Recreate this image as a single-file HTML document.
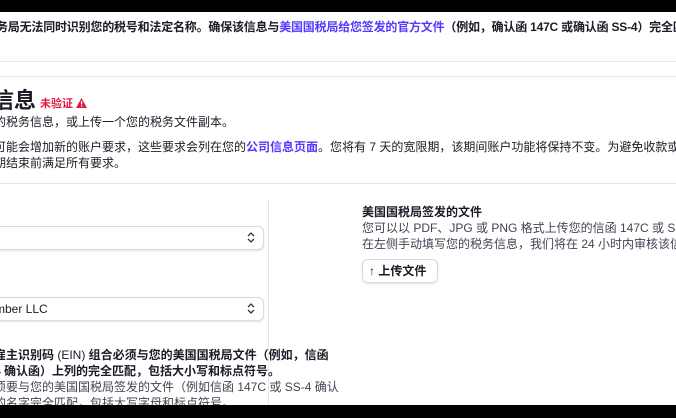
<!DOCTYPE html>
<html><head><meta charset="utf-8"><style>
html,body{margin:0;padding:0;width:676px;height:418px;overflow:hidden;background:#fff;position:relative;font-family:"Liberation Sans","Noto Sans CJK SC",sans-serif;color:#1a1b25}
.a{position:absolute;white-space:nowrap;font-size:12px;line-height:16px}
.b{font-weight:bold}
.link{color:#533afd}
.g{color:#414552}
.sel{position:absolute;left:-10px;width:272px;height:22px;border:1px solid #d5dbe1;border-radius:6px;box-shadow:0 1px 2px rgba(0,0,0,.12);background:#fff}
.chev{position:absolute;right:8px;top:4px}
</style></head><body>
<div style="position:absolute;left:0;top:0;width:676px;height:12px;background:#000"></div>
<div class="a b" style="left:-4px;top:19px;letter-spacing:-0.2px">务局无法同时识别您的税号和法定名称。确保该信息与<span class="link">美国国税局给您签发的官方文件</span>（例如，确认函 147C 或确认函 SS-4）完全匹配。如</div>
<div style="position:absolute;left:0;top:61px;width:676px;height:1px;background:#e3e8ee"></div>
<div style="position:absolute;left:0;top:76px;width:676px;height:1px;background:#e3e8ee"></div>
<div class="a b" style="left:-8px;top:86px;font-size:22px;line-height:30px">信息</div>
<div class="a b" style="left:40px;top:96px;font-size:11px;color:#df1b41">未验证 <svg width="11" height="10" viewBox="0 0 11 10" style="vertical-align:-1px"><path d="M5.5 0L11 10H0Z" fill="#df1b41"/><rect x="5" y="3" width="1.2" height="3.6" fill="#fff"/><rect x="5" y="7.5" width="1.2" height="1.2" fill="#fff"/></svg></div>
<div class="a" style="left:-6px;top:114px">的税务信息，或上传一个您的税务文件副本。</div>
<div class="a" style="left:-6px;top:139px">可能会增加新的账户要求，这些要求会列在您的<span class="link b">公司信息页面</span>。您将有 7 天的宽限期，该期间账户功能将保持不变。为避免收款或提现功</div>
<div class="a" style="left:-6px;top:155px">期结束前满足所有要求。</div>
<div style="position:absolute;left:0;top:183px;width:676px;height:1px;background:#e3e8ee"></div>
<div style="position:absolute;left:268px;top:200px;width:1px;height:206px;background:#e3e8ee"></div>
<div class="sel" style="top:226px"><svg class="chev" width="8" height="13" viewBox="0 0 8 13"><path d="M1 5L4 2L7 5M1 8L4 11L7 8" fill="none" stroke="#333" stroke-width="1.3"/></svg></div>
<div class="sel" style="top:297px"><span class="a" style="left:4px;top:3px">mber LLC</span><svg class="chev" width="8" height="13" viewBox="0 0 8 13"><path d="M1 5L4 2L7 5M1 8L4 11L7 8" fill="none" stroke="#333" stroke-width="1.3"/></svg></div>
<div class="a b" style="left:-6px;top:347px">雇主识别码 <span style="font-weight:normal">(EIN)</span> 组合必须与您的美国国税局文件（例如，信函</div>
<div class="a b" style="left:-6px;top:363px">4 确认函）上列的完全匹配，包括大小写和标点符号。</div>
<div class="a g" style="left:-6px;top:379px">须要与您的美国国税局签发的文件（例如信函 147C 或 SS-4 确认</div>
<div class="a g" style="left:-6px;top:395px">的名字完全匹配，包括大写字母和标点符号。</div>
<div class="a b" style="left:362px;top:204px">美国国税局签发的文件</div>
<div class="a g" style="left:362px;top:220px">您可以以 PDF、JPG 或 PNG 格式上传您的信函 147C 或 SS-4 确</div>
<div class="a g" style="left:362px;top:236px">在左侧手动填写您的税务信息，我们将在 24 小时内审核该信息</div>
<div style="position:absolute;left:362px;top:259px;width:74px;height:22px;border:1px solid #d5dbe1;border-radius:6px;box-shadow:0 1px 2px rgba(0,0,0,.12)"><span class="a b" style="left:6px;top:3px">↑ 上传文件</span></div>
<div style="position:absolute;left:0;top:405px;width:676px;height:13px;background:#000"></div>
</body></html>
